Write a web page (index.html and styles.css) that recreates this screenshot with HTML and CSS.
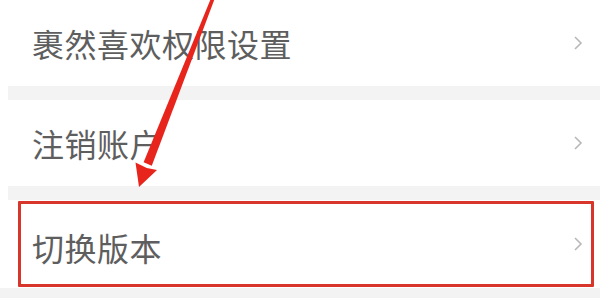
FILE: index.html
```html
<!DOCTYPE html>
<html lang="zh-CN">
<head>
    <meta charset="UTF-8">
    <meta name="viewport" content="width=device-width, initial-scale=1.0">
    <title>设置</title>
    <link rel="stylesheet" href="styles.css">
</head>
<body>
    <div class="settings">
        <div class="row">
            <span class="row-label">裹然喜欢权限设置</span>
            <svg class="chevron" viewBox="0 0 10 16"><polyline points="2,2 8,8 2,14"/></svg>
        </div>
        <div class="divider"></div>
        <div class="row">
            <span class="row-label">注销账户</span>
            <svg class="chevron" viewBox="0 0 10 16"><polyline points="2,2 8,8 2,14"/></svg>
        </div>
        <div class="divider"></div>
        <div class="row row-marked">
            <span class="row-label">切换版本</span>
            <svg class="chevron" viewBox="0 0 10 16"><polyline points="2,2 8,8 2,14"/></svg>
            <div class="highlight"></div>
        </div>
        <div class="divider divider-last"></div>
    </div>

    <!-- 标注箭头 -->
    <svg class="annotation" viewBox="0 0 600 308" xmlns="http://www.w3.org/2000/svg">
        <polygon points="211.3,-2.5 214.7,-1.3 151.8,165.8 143.6,162.2" fill="#e8251d"/>
        <polygon points="139,187 135.5,162.5 146.8,168 157,170" fill="#e8251d"/>
    </svg>
</body>
</html>
```

FILE: styles.css
```css
body, html {
    margin: 0;
    padding: 0;
    background-color: #ffffff;
    font-family: 'Noto Sans CJK SC', 'Noto Sans', sans-serif;
    width: 600px;
    height: 308px;
    overflow: hidden;
}

.settings {
    display: flex;
    flex-direction: column;
}

.row {
    height: 86px;
    display: flex;
    align-items: center;
    justify-content: space-between;
    padding: 0 17px 0 32px;
    position: relative;
}

.row-label {
    font-size: 32px;
    color: #5e5e5e;
    letter-spacing: 0.5px;
    line-height: 1;
}

.row-marked {
    height: 88px;
}

.row-marked .row-label {
    padding-top: 6px;
}

.chevron {
    width: 10px;
    height: 16px;
    fill: none;
    stroke: #b8b8b8;
    stroke-width: 1.6;
}

.divider {
    height: 14px;
    margin-left: 8px;
    background-color: #f3f3f3;
}

.divider-last {
    height: 10px;
    margin-left: 0;
}

.highlight {
    position: absolute;
    left: 18px;
    top: 1px;
    right: 6px;
    bottom: 1px;
    border: 3px solid #d8362b;
    border-radius: 1px;
}

.annotation {
    position: absolute;
    top: 0;
    left: 0;
    width: 600px;
    height: 308px;
    pointer-events: none;
}
```
